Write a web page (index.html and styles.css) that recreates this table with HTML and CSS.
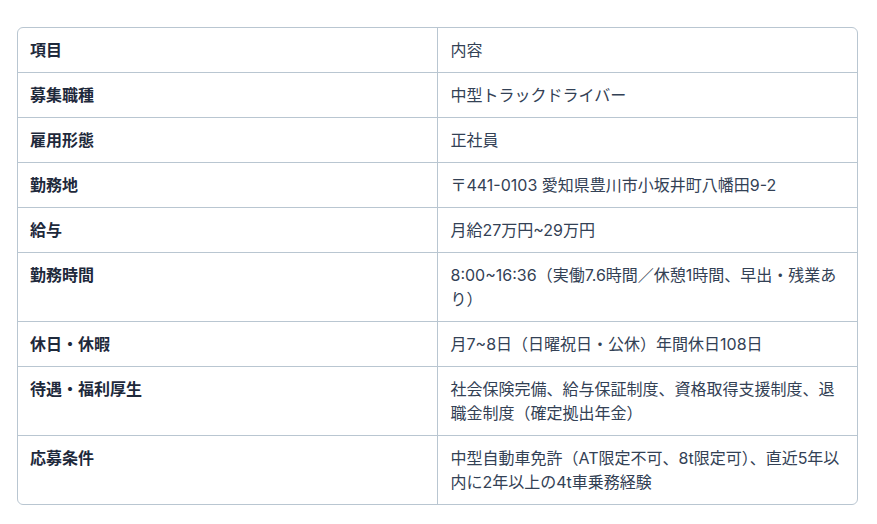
FILE: index.html
```html
<!DOCTYPE html>
<html lang="ja">
<head>
<meta charset="utf-8">
<link rel="stylesheet" href="styles.css">
</head>
<body>
<div class="wrap">
  <table class="info">
    <colgroup><col class="col-label"><col class="col-value"></colgroup>
    <thead>
      <tr><th class="label">項目</th><th class="value">内容</th></tr>
    </thead>
    <tbody>
      <tr><td class="label">募集職種</td><td class="value">中型トラックドライバー</td></tr>
      <tr><td class="label">雇用形態</td><td class="value">正社員</td></tr>
      <tr><td class="label">勤務地</td><td class="value">〒441-0103 愛知県豊川市小坂井町八幡田9-2</td></tr>
      <tr><td class="label">給与</td><td class="value">月給27万円~29万円</td></tr>
      <tr><td class="label">勤務時間</td><td class="value">8:00~16:36（実働7.6時間／休憩1時間、早出・残業あり）</td></tr>
      <tr><td class="label">休日・休暇</td><td class="value">月7~8日（日曜祝日・公休）年間休日108日</td></tr>
      <tr><td class="label">待遇・福利厚生</td><td class="value">社会保険完備、給与保証制度、資格取得支援制度、退職金制度（確定拠出年金）</td></tr>
      <tr><td class="label">応募条件</td><td class="value">中型自動車免許（AT限定不可、8t限定可）、直近5年以内に2年以上の4t車乗務経験</td></tr>
    </tbody>
  </table>
</div>
</body>
</html>
```

FILE: styles.css
```css
html, body {
  margin: 0;
  padding: 0;
  background: #ffffff;
}
body {
  font-family: "Inter", "Noto Sans CJK JP", sans-serif;
  font-size: 16px;
  color: #334155;
}
.wrap {
  margin: 27px 19px 0 17px;
  border: 1px solid #b9c6d1;
  border-radius: 6px;
  overflow: hidden;
}
.info {
  width: 100%;
  border-collapse: separate;
  border-spacing: 0;
  table-layout: fixed;
}
.col-label, .col-value {
  width: 50%;
}
.info th, .info td {
  padding: 10px 12px 10px 13px;
  line-height: 24px;
  vertical-align: top;
  text-align: left;
  border-bottom: 1px solid #b9c6d1;
}
.info tbody tr:last-child td {
  border-bottom: none;
}
.info .label {
  font-weight: 700;
  color: #1e293b;
  border-right: 1px solid #b9c6d1;
  padding-left: 12px;
}
.info .value {
  font-weight: 400;
  color: #334155;
}
```
